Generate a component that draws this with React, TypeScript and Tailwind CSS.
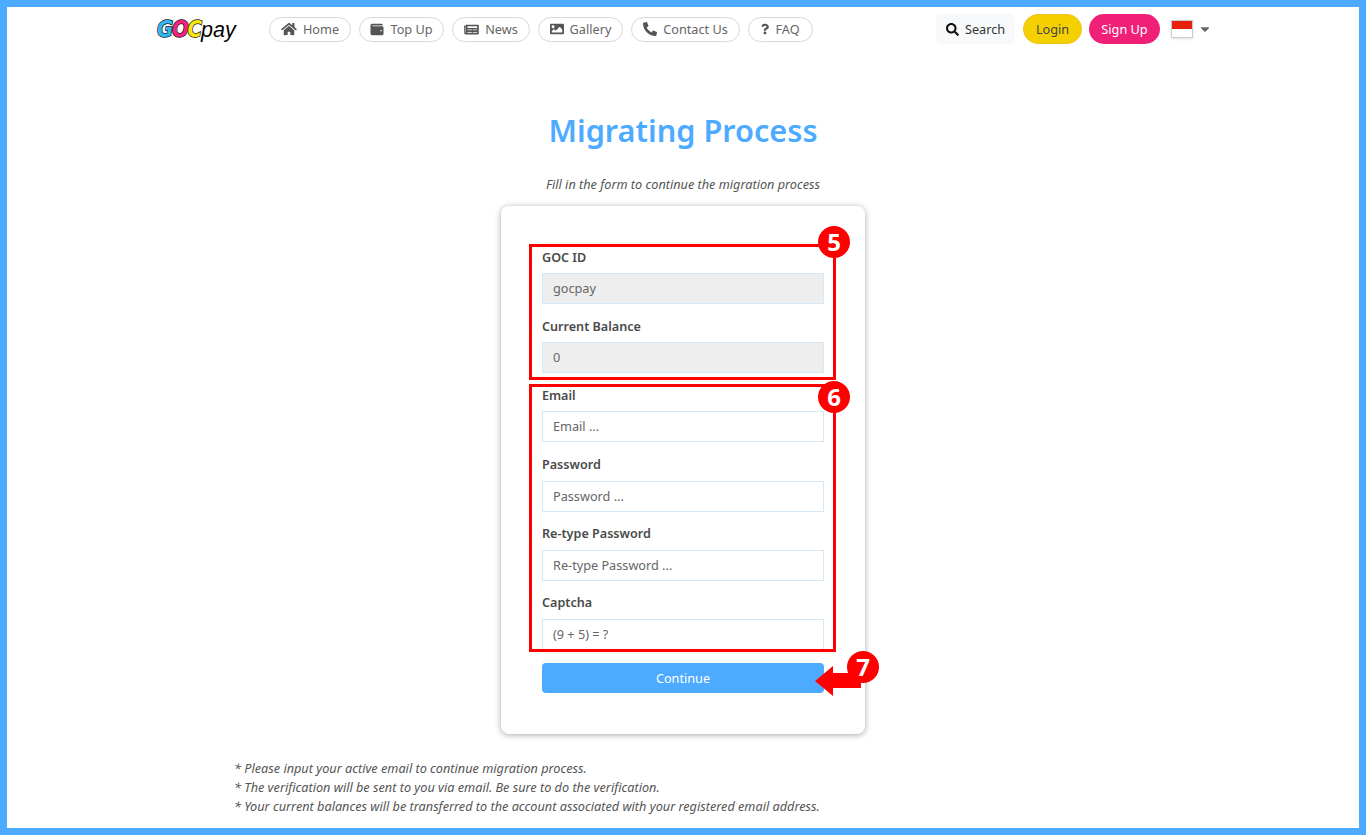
import { FaHome, FaWallet, FaNewspaper, FaImage, FaPhoneAlt, FaQuestion, FaSearch, FaCaretDown } from "react-icons/fa";
import type { ReactNode } from "react";

const pills: { label: string; icon: ReactNode; w: string }[] = [
  { label: "Home", icon: <FaHome className="w-[16px] h-[14px]" />, w: "w-[82px]" },
  { label: "Top Up", icon: <FaWallet className="w-[14px] h-[13px]" />, w: "w-[85px]" },
  { label: "News", icon: <FaNewspaper className="w-[15px] h-[13px]" />, w: "w-[78px]" },
  { label: "Gallery", icon: <FaImage className="w-[14px] h-[14px]" />, w: "w-[85px]" },
  { label: "Contact Us", icon: <FaPhoneAlt className="w-[14px] h-[14px]" />, w: "w-[109px]" },
  { label: "FAQ", icon: <FaQuestion className="w-[8px] h-[12px]" />, w: "w-[65px]" },
];

function Field({ label, value, placeholder, disabled }: { label: string; value?: string; placeholder?: string; disabled?: boolean }) {
  return (
    <div className="h-[69.2px]">
      <div className="h-[21px] pt-[1px] flex items-center text-[12.6px] font-semibold text-[#4a4a4a]">{label}</div>
      <div className="h-[5px]" />
      <div className={`h-[31px] flex items-center px-[10px] border border-[#d5e9f5] text-[12.7px] text-[#666] ${disabled ? "bg-[#eeeeee]" : "bg-white"}`}>
        {value ?? placeholder}
      </div>
    </div>
  );
}

function Badge({ n, className }: { n: string; className: string }) {
  return (
    <div className={`absolute w-[32px] h-[32px] rounded-full bg-[#ff0000] text-white flex items-center justify-center text-[24px] font-bold font-['Open_Sans',sans-serif] ${className}`}>
      {n}
    </div>
  );
}

export default function App() {
  return (
    <div className="h-[835px] border-[7px] border-[#4dabff] bg-white font-['Noto_Sans',sans-serif] text-[#555] overflow-hidden">
      <nav className="h-[44px] flex items-center pl-[150px] pr-[148px]">
        <div className="w-[112px] flex items-center select-none">
          <span className="w-[44px] origin-left scale-x-[0.86] whitespace-nowrap font-['DejaVu_Sans',sans-serif] font-bold italic text-[23px] leading-none tracking-[-1.5px] [-webkit-text-stroke:1.5px_#111] [paint-order:stroke_fill]">
            <span className="text-[#36b4f0]">G</span>
            <span className="text-[#f0237f]">O</span>
            <span className="text-[#f8e60c]">C</span>
          </span>
          <span className="mt-[4px] font-['Liberation_Sans',sans-serif] italic text-[21.5px] leading-none text-black">pay</span>
        </div>
        <div className="flex items-center gap-[8px]">
          {pills.map((p) => (
            <div key={p.label} className={`${p.w} h-[25px] rounded-full border border-[#d8d8d8] flex items-center justify-center gap-[6px] text-[12.7px] text-[#666]`}>
              <span className="text-[#555]">{p.icon}</span>
              <span className="mt-[1px]">{p.label}</span>
            </div>
          ))}
        </div>
        <div className="ml-auto flex items-center">
          <div className="w-[79px] h-[30px] rounded-[5px] bg-[#f8f9fa] flex items-center justify-center gap-[6px] text-[12.7px] text-[#333]">
            <FaSearch className="w-[13px] h-[13px] text-[#111]" />
            <span className="mt-[1px]">Search</span>
          </div>
          <div className="ml-[8px] w-[59px] h-[30px] pt-[1px] rounded-full bg-[#f5d000] border border-[#f0c020] flex items-center justify-center text-[12.7px] text-[#444]">Login</div>
          <div className="ml-[7px] w-[71px] h-[30px] pt-[1px] rounded-full bg-[#f01f78] flex items-center justify-center text-[12.7px] text-white">Sign Up</div>
          <div className="ml-[11px] w-[22px] h-[18px] border border-[#ccc] shadow-sm flex flex-col">
            <div className="h-1/2 bg-[#e8210f]" />
            <div className="h-1/2 bg-white" />
          </div>
          <FaCaretDown className="ml-[6px] w-[12px] h-[14px] text-[#666]" />
        </div>
      </nav>

      <h1 className="mt-[55px] h-[48px] flex items-center justify-center text-[30.7px] font-semibold text-[#4dabff]">Migrating Process</h1>
      <p className="mt-[21px] h-[20px] flex items-center justify-center text-[12.7px] italic text-[#555]">Fill in the form to continue the migration process</p>

      <div className="relative mt-[11px] mx-auto w-[364px] h-[528px] rounded-[8px] bg-white shadow-[0_1px_6px_rgba(0,0,0,0.35)] pl-[41px] pr-[41px] pt-[41px]">
        <Field label="GOC ID" value="gocpay" disabled />
        <Field label="Current Balance" value="0" disabled />
        <Field label="Email" placeholder="Email ..." />
        <Field label="Password" placeholder="Password ..." />
        <Field label="Re-type Password" placeholder="Re-type Password ..." />
        <Field label="Captcha" placeholder="(9 + 5) = ?" />
        <div className="mt-[1px] h-[30px] rounded-[4px] bg-[#4dabff] flex items-center justify-center text-[12.7px] text-white">Continue</div>

        <div className="absolute left-[28px] top-[38px] w-[307px] h-[136px] border-[3px] border-[#ff0000]" />
        <div className="absolute left-[28px] top-[178px] w-[307px] h-[268px] border-[3px] border-[#ff0000]" />
        <Badge n="5" className="left-[317px] top-[20px]" />
        <Badge n="6" className="left-[317px] top-[175px]" />
        <svg className="absolute left-[314px] top-[460px]" width="48" height="32" viewBox="0 0 48 32">
          <polygon points="0,15 18,0 18,7 46,7 46,22 18,22 18,30" fill="#ff0000" />
        </svg>
        <Badge n="7" className="left-[346px] top-[445px]" />
      </div>

      <div className="mt-[25px] pl-[227px] text-[12.7px] italic leading-[19px] text-[#555]">
        <p>* Please input your active email to continue migration process.</p>
        <p>* The verification will be sent to you via email. Be sure to do the verification.</p>
        <p>* Your current balances will be transferred to the account associated with your registered email address.</p>
      </div>
    </div>
  );
}
